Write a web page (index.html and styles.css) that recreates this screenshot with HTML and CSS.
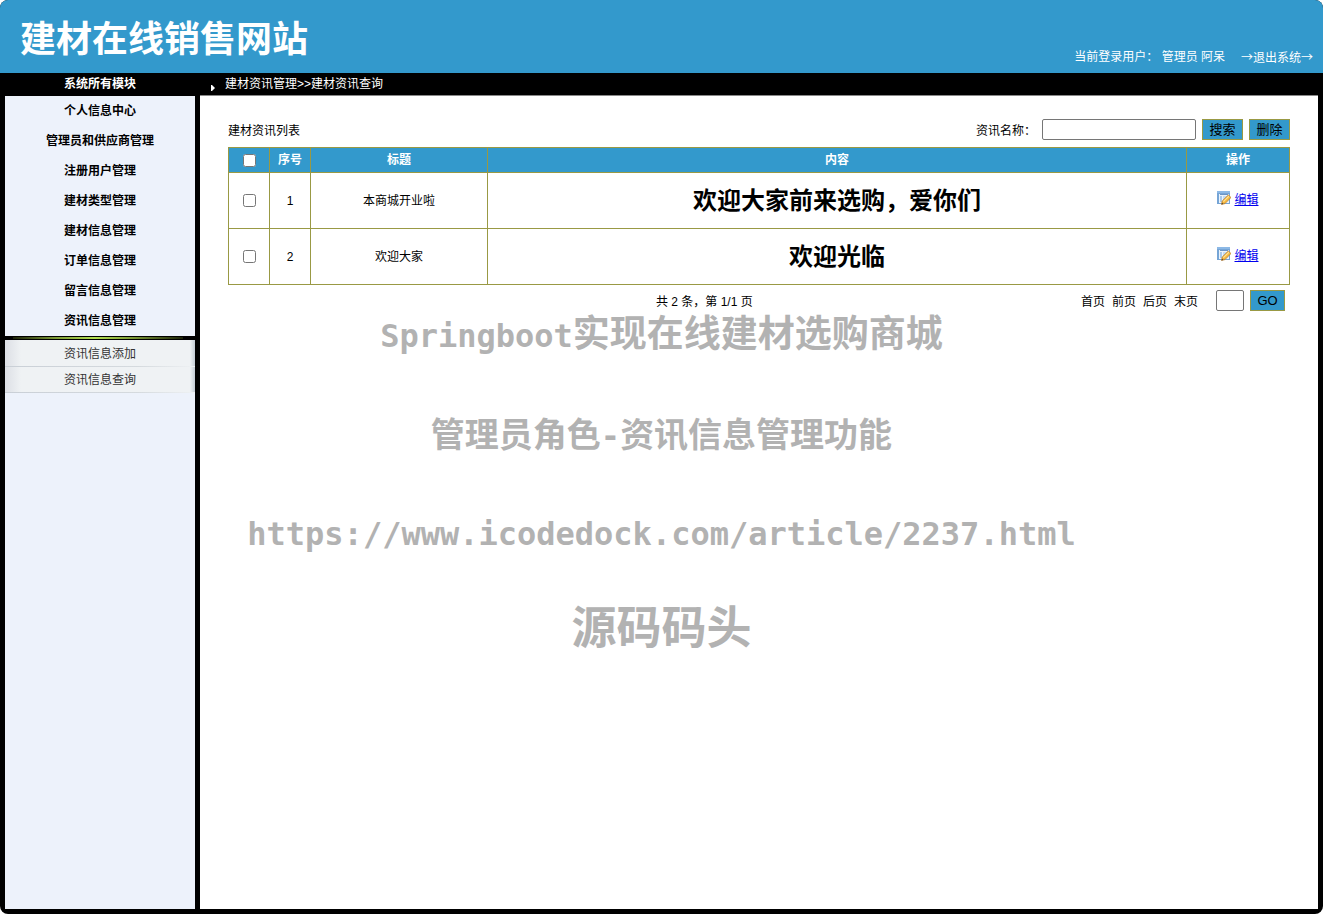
FILE: index.html
```html
<!DOCTYPE html>
<html lang="zh-CN">
<head>
<meta charset="utf-8">
<title>建材在线销售网站</title>
<link rel="stylesheet" href="styles.css">
</head>
<body>
<svg class="sprite" aria-hidden="true">
  <symbol id="icon-edit" viewBox="0 0 14 14">
    <rect x="0" y="0" width="13" height="13" fill="#76a5d6"/>
    <rect x="0" y="0" width="13" height="2" fill="#8db9e6"/>
    <rect x="2" y="3" width="10" height="9" fill="#eaf3fc"/>
    <rect x="3" y="3" width="8" height="1" fill="#6d95c4"/>
    <rect x="3" y="5" width="2" height="6" fill="#a9c9ea"/>
    <rect x="6" y="5" width="5" height="5" fill="#c4dbf2"/>
    <path d="M4.5 13.4 5.2 10 11.3 4 14 6.5 8 12.6Z" fill="#f5b93f" stroke="#b5772a" stroke-width=".7"/>
    <path d="M6.4 10.6 12 5.2" stroke="#ffe59a" stroke-width="1.1"/>
    <path d="M4.5 13.4 5 11.4 6.5 12.9Z" fill="#5b4630"/>
  </symbol>
</svg>
<div class="page">
  <header class="header">
    <h1 class="logo">建材在线销售网站</h1>
    <div class="user">
      <span>当前登录用户：&nbsp;管理员 阿呆</span>
      <a class="logout" href="#">→退出系统→</a>
    </div>
  </header>
  <div class="body">
    <aside class="side">
      <h2 class="side-title">系统所有模块</h2>
      <nav class="menu">
        <a class="menu-item" href="#">个人信息中心</a>
        <a class="menu-item" href="#">管理员和供应商管理</a>
        <a class="menu-item" href="#">注册用户管理</a>
        <a class="menu-item" href="#">建材类型管理</a>
        <a class="menu-item" href="#">建材信息管理</a>
        <a class="menu-item" href="#">订单信息管理</a>
        <a class="menu-item" href="#">留言信息管理</a>
        <a class="menu-item" href="#">资讯信息管理</a>
        <div class="submenu">
          <a class="submenu-item" href="#">资讯信息添加</a>
          <a class="submenu-item" href="#">资讯信息查询</a>
        </div>
      </nav>
    </aside>
    <main class="main">
      <div class="crumbs">
        <svg class="arrow" viewBox="0 0 4 6" aria-hidden="true"><path d="M0 0H1L4 3 1 6H0Z" fill="#fff"/></svg>
        <span>建材资讯管理&gt;&gt;建材资讯查询</span>
      </div>
      <div class="content">
        <form class="toolbar">
          <span class="list-title">建材资讯列表</span>
          <label class="caption" for="name">资讯名称：</label>
          <input class="field search" id="name" type="text">
          <button class="btn" type="button">搜索</button>
          <button class="btn" type="button">删除</button>
        </form>
        <table class="grid">
          <colgroup><col class="c-check"><col class="c-no"><col class="c-title"><col><col class="c-op"></colgroup>
          <thead>
            <tr>
              <th><input class="check" type="checkbox" aria-label="全选"></th>
              <th>序号</th><th>标题</th><th>内容</th><th>操作</th>
            </tr>
          </thead>
          <tbody>
            <tr>
              <td><input class="check" type="checkbox" aria-label="选择 1"></td>
              <td>1</td><td>本商城开业啦</td>
              <td class="text">欢迎大家前来选购，爱你们</td>
              <td><span class="op"><svg class="edit" aria-hidden="true"><use href="#icon-edit"/></svg><a href="#">编辑</a></span></td>
            </tr>
            <tr>
              <td><input class="check" type="checkbox" aria-label="选择 2"></td>
              <td>2</td><td>欢迎大家</td>
              <td class="text">欢迎光临</td>
              <td><span class="op"><svg class="edit" aria-hidden="true"><use href="#icon-edit"/></svg><a href="#">编辑</a></span></td>
            </tr>
          </tbody>
        </table>
        <form class="pager">
          <span class="total">共 2 条，第 1/1 页</span>
          <span class="pages"><a href="#">首页</a><a href="#">前页</a><a href="#">后页</a><a href="#">末页</a></span>
          <input class="field jump" type="text" aria-label="页码">
          <button class="btn go" type="button">GO</button>
        </form>
      </div>
    </main>
  </div>
  <div class="watermark">
    <p class="wm-name"><span class="mono">Springboot</span>实现在线建材选购商城</p>
    <p class="wm-role">管理员角色<span class="mono">-</span>资讯信息管理功能</p>
    <p class="wm-url"><span class="mono">https://www.icodedock.com/article/2237.html</span></p>
    <p class="wm-site">源码码头</p>
  </div>
</div>
</body>
</html>
```
FILE: styles.css
```css
* { box-sizing: border-box; }

body {
  margin: 0;
  background: #fff;
  color: #000;
  font: 12px/18px "Liberation Sans", "Noto Sans CJK SC", sans-serif;
}

h1, h2, p { margin: 0; }

.sprite { display: none; }

.page {
  position: relative;
  display: flex;
  flex-direction: column;
  min-height: 100vh;
  background: #000;
  border-radius: 8px;
  overflow: hidden;
}

.header {
  display: flex;
  justify-content: space-between;
  align-items: flex-end;
  padding: 12px 10px 7px 20px;
  background: #39c;
  color: #fff;
}

.logo { padding-top: 2px; font-size: 36px; line-height: 52px; font-weight: bold; }

.user { display: flex; gap: 16px; }

.logout { color: #fff; text-decoration: none; font-family: "Noto Sans CJK SC", sans-serif; }

.body {
  flex: 1;
  display: flex;
  gap: 5px;
  padding: 0 5px 5px;
}

.side { flex: 0 0 190px; display: flex; flex-direction: column; }

.side-title {
  color: #fff;
  font-size: 12px;
  line-height: 23px;
  text-align: center;
}

.menu { flex: 1; background: #edf2fb; }

.menu-item {
  display: block;
  color: #000;
  font-weight: bold;
  line-height: 30px;
  text-align: center;
  text-decoration: none;
}

.submenu {
  position: relative;
  padding-top: 1px;
  border-top: 4px solid #000;
  background: linear-gradient(90deg, #dcdfe5, #eff2f4 16px calc(100% - 5px), #c3ccd4);
}

.submenu::before {
  content: "";
  position: absolute;
  top: -3px;
  left: 8px;
  right: 12px;
  height: 2px;
  background: linear-gradient(90deg, #1b2107, #7d9b35 25%, #b4e050 48%, #7d9b35 70%, #1b2107);
}

.submenu-item {
  display: block;
  padding-top: 2px;
  color: #333;
  line-height: 23px;
  text-align: center;
  text-decoration: none;
  border-bottom: 1px solid;
  border-image: linear-gradient(90deg, #c9cfd6, #d5dade 70%, #eff2f4) 1;
}

.main { flex: 1; display: flex; flex-direction: column; min-width: 0; }

.crumbs {
  display: flex;
  align-items: center;
  gap: 10px;
  padding: 0 11px;
  color: #fff;
  line-height: 22px;
  border-bottom: 1px solid #888;
}

.arrow { width: 4px; height: 6px; align-self: flex-end; margin-bottom: 4px; }

.content { flex: 1; background: #fff; padding: 22px 28px; }

.toolbar {
  display: flex;
  align-items: center;
  gap: 6px;
  padding-bottom: 7px;
}

.list-title { flex: 1; padding-top: 4px; }
.caption { padding-top: 4px; }

.field {
  height: 21px;
  border: 1px solid #767676;
  border-radius: 2px;
  background: #fff;
  padding: 1px 2px;
}

.search { width: 154px; }

.btn {
  height: 21px;
  min-width: 41px;
  padding: 1px 6px 0;
  border: 1px solid #994;
  border-radius: 0;
  background: #39c;
  color: #000;
  font: 13px/18px "Liberation Sans", "Noto Sans CJK SC", sans-serif;
}

.grid {
  width: 100%;
  table-layout: fixed;
  border-collapse: collapse;
  text-align: center;
}

.grid th, .grid td { border: 1px solid #994; padding: 0; }
.grid th { height: 25px; background: #39c; color: #fff; }
.grid td { height: 56px; }
.grid .text { font-size: 24px; line-height: 36px; font-weight: bold; }
.grid a { color: #00e; }

.c-check, .c-no { width: 41px; }
.c-title { width: 177px; }
.c-op { width: 103px; }

.check { display: block; width: 13px; height: 13px; margin: 0 auto; }

.op { display: inline-flex; gap: 3px; }
.edit { width: 14px; height: 14px; }

.pager {
  display: flex;
  align-items: center;
  gap: 6px;
  padding: 5px 5px 0 0;
}

.total { flex: 1; text-align: center; padding: 3px 0 0 10%; }

.pages { display: flex; gap: 7px; padding: 3px 12px 0 0; }
.pages a { color: #000; text-decoration: none; }

.jump { width: 28px; }
.btn.go { min-width: 35px; }

.watermark {
  position: absolute;
  top: 307px;
  left: 0;
  right: 0;
  color: #b2b2b2;
  font-weight: bold;
  text-align: center;
  white-space: nowrap;
  pointer-events: none;
}

.mono { font-family: "DejaVu Sans Mono", monospace; font-size: 32px; line-height: 1; }

.wm-name { font-size: 37px; line-height: 56px; margin-bottom: 44px; }
.wm-role { font-size: 34px; line-height: 56px; margin-bottom: 44px; }
.wm-url { line-height: 68px; margin-bottom: 20px; }
.wm-site { font-size: 45px; line-height: 68px; }
```
